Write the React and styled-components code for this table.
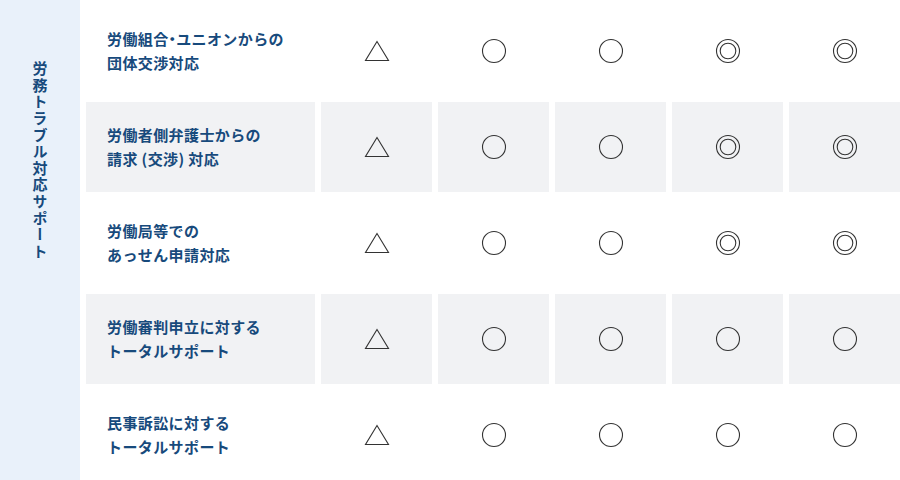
import styled, { createGlobalStyle } from "styled-components";

const GlobalStyle = createGlobalStyle`
    html, body {
        margin: 0;
        padding: 0;
        background: #ffffff;
    }
    body {
        font-family: "Noto Sans CJK JP", "Noto Sans", sans-serif;
    }
`;

// "・" is split out so it can be set narrow
const rows = [
    { label: [["労働組合", "・", "ユニオンからの"], ["団体交渉対応"]], marks: ["tri", "o", "o", "oo", "oo"] },
    { label: [["労働者側弁護士からの"], ["請求 (交渉) 対応"]], marks: ["tri", "o", "o", "oo", "oo"] },
    { label: [["労働局等での"], ["あっせん申請対応"]], marks: ["tri", "o", "o", "oo", "oo"] },
    { label: [["労働審判申立に対する"], ["トータルサポート"]], marks: ["tri", "o", "o", "o", "o"] },
    { label: [["民事訴訟に対する"], ["トータルサポート"]], marks: ["tri", "o", "o", "o", "o"] },
];

function Mark({ type }) {
    if (type === "tri") {
        return (
            <svg width="26" height="24" viewBox="0 0 26 24">
                <polygon points="13,2.5 1.5,21.5 24.5,21.5" fill="none" stroke="#333" strokeWidth="1.1" />
            </svg>
        );
    }
    return (
        <svg width="26" height="26" viewBox="0 0 26 26">
            <circle cx="13" cy="13" r="11.5" fill="none" stroke="#333" strokeWidth="1.1" />
            {type === "oo" && <circle cx="13" cy="13" r="7.8" fill="none" stroke="#333" strokeWidth="1.1" />}
        </svg>
    );
}

function Line({ parts }) {
    return (
        <span>
            {parts.map((p, k) => (p === "・" ? <Narrow key={k}>{p}</Narrow> : p))}
        </span>
    );
}

export default function App() {
    return (
        <>
            <GlobalStyle />
            <Wrapper>
                <Category>
                    <CategoryText>労務トラブル対応サポート</CategoryText>
                </Category>
                <Table>
                    {rows.map((row, i) => (
                        <Row key={i}>
                            <LabelCell $shaded={i % 2 === 1}>
                                <Line parts={row.label[0]} />
                                <Line parts={row.label[1]} />
                            </LabelCell>
                            {row.marks.map((m, j) => (
                                <MarkCell key={j} $shaded={i % 2 === 1}>
                                    <Mark type={m} />
                                </MarkCell>
                            ))}
                        </Row>
                    ))}
                </Table>
            </Wrapper>
        </>
    );
}

const Wrapper = styled.div`
    width: 900px;
    height: 480px;
    display: flex;
    overflow: hidden;
`;

const Category = styled.div`
    width: 80px;
    flex-shrink: 0;
    background-color: #e9f1fa;
    display: flex;
    justify-content: center;
    padding-top: 61px;
    box-sizing: border-box;
`;

const CategoryText = styled.div`
    writing-mode: vertical-rl;
    font-size: 15px;
    font-weight: 700;
    color: #174a7c;
    letter-spacing: 1.6px;
    line-height: 1;
`;

const Table = styled.div`
    flex: 1;
    display: flex;
    flex-direction: column;
    gap: 6px;
    padding: 6px 0 0 6px;
`;

const Row = styled.div`
    display: grid;
    grid-template-columns: 229px repeat(5, 111px);
    gap: 6px;
    height: 90px;
    flex-shrink: 0;
`;

const LabelCell = styled.div`
    background-color: ${p => (p.$shaded ? "#f1f2f4" : "#ffffff")};
    display: flex;
    flex-direction: column;
    justify-content: center;
    padding-left: 21px;
    font-size: 15px;
    font-weight: 700;
    line-height: 24px;
    letter-spacing: 0.4px;
    color: #174a7c;
    white-space: nowrap;
`;

const Narrow = styled.span`
    font-feature-settings: "palt";
    letter-spacing: 0;
`;

const MarkCell = styled.div`
    background-color: ${p => (p.$shaded ? "#f1f2f4" : "#ffffff")};
    display: flex;
    align-items: center;
    justify-content: center;
`;
